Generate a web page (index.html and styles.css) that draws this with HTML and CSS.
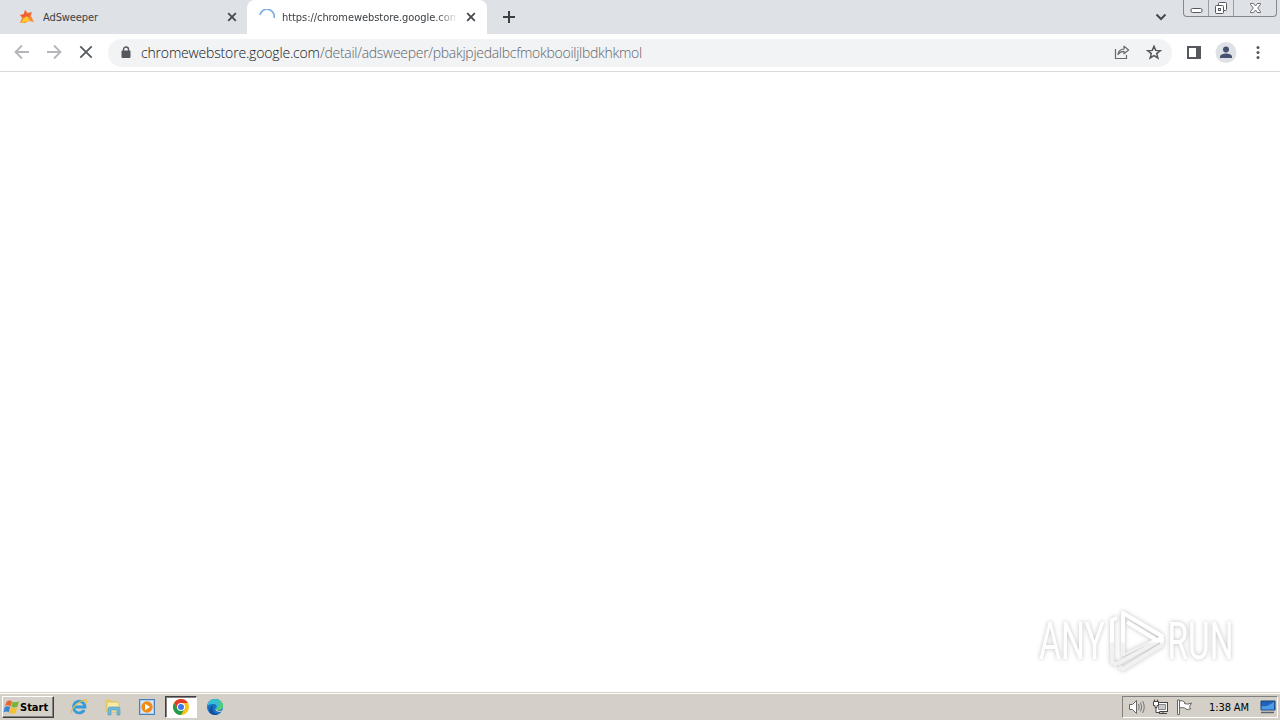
FILE: index.html
```
<!DOCTYPE html>
<html lang="en">
<head>
<meta charset="UTF-8" />
<title>chromewebstore.google.com</title>
<link rel="stylesheet" href="styles.css">
</head>
<body>

<div class="browser">
  <div class="tab-strip">
    <div class="tab">
      <svg class="favicon" width="16" height="16" viewBox="0 0 16 16">
        <path d="M6 1l3 3 4-1-1 4 3 6-5-1-4 2-5 0 2-5-2-3 4 0z" fill="#f58a3c"/>
        <path d="M6 1l2 4 4-2-2 5-5 1-4-3 4-1z" fill="#ef5d3b"/>
        <path d="M8 7l3 5-5 1-4 1 3-5z" fill="#ffc928"/>
      </svg>
      <span class="tab-title">AdSweeper</span>
      <svg class="tab-close" width="10" height="10" viewBox="0 0 10 10"><path d="M1.2 1.2l7.6 7.6M8.800 1.200L1.200 8.800" stroke="#45494e" stroke-width="1.8"/></svg>
    </div>
    <div class="tab active">
      <svg class="favicon" width="16" height="16" viewBox="0 0 16 16"><path d="M.9 6A7.200 7.200 0 0 1 15.100 9" fill="none" stroke="#80aee6" stroke-width="1.700"/></svg>
      <span class="tab-title fade">https://chromewebstore.google.com</span>
      <svg class="tab-close" width="10" height="10" viewBox="0 0 10 10"><path d="M1.2 1.2l7.6 7.6M8.800 1.200L1.200 8.800" stroke="#45494e" stroke-width="1.8"/></svg>
    </div>
    <svg class="new-tab" width="12" height="12" viewBox="0 0 12 12"><path d="M6 0v12M0 6h12" stroke="#3c4043" stroke-width="2"/></svg>
    <svg class="tab-search" width="12" height="8" viewBox="0 0 12 8"><path d="M1.5 1.5L6 6l4.500-4.500" fill="none" stroke="#45494e" stroke-width="2"/></svg>
    <div class="window-buttons">
      <div class="win-btn min"><svg width="13" height="16" viewBox="0 0 13 16"><rect x="1" y="8.500" width="11" height="4" rx="1.500" fill="#fff" stroke="#55585e"/></svg></div>
      <div class="win-btn max"><svg width="14" height="16" viewBox="0 0 14 16"><path d="M4.500 5V3.500q0-1 1-1h6q1 0 1 1v6q0 1-1 1H10" fill="#fff" stroke="#55585e"/><rect x="1.500" y="5.500" width="8" height="8" rx="1" fill="#fff" stroke="#55585e"/><rect x="4.500" y="8.500" width="2" height="2" fill="none" stroke="#55585e"/></svg></div>
      <div class="win-btn close"><svg width="13" height="16" viewBox="0 0 13 16"><path d="M1.500 3.500h3l2 2.500 2-2.500h3v1L8.700 8l2.800 3.500v1h-3l-2-2.500-2 2.500h-3v-1L4.300 8 1.500 4.500z" fill="#fff" stroke="#66696f"/></svg></div>
    </div>
  </div>

  <div class="toolbar">
    <svg class="nav" width="16" height="16" viewBox="0 0 16 16"><path d="M15 8H2M8 1.500L1.500 8 8 14.500" fill="none" stroke="#b4b6b9" stroke-width="1.800"/></svg>
    <svg class="nav" width="16" height="16" viewBox="0 0 16 16"><path d="M1 8h13M8 1.500L14.500 8 8 14.500" fill="none" stroke="#b4b6b9" stroke-width="1.800"/></svg>
    <svg class="nav" width="16" height="16" viewBox="0 0 16 16"><path d="M2.300 2.300l11.400 11.400M13.700 2.300L2.300 13.700" stroke="#55595e" stroke-width="1.800"/></svg>
    <div class="omnibox">
      <svg width="10" height="13" viewBox="0 0 10 13"><path d="M2.500 6V3.500a2.500 2.500 0 0 1 5 0V6" fill="none" stroke="#55595e" stroke-width="1.400"/><rect x=".5" y="4.500" width="9" height="7.500" rx="1" fill="#55595e"/></svg>
      <div class="url"><span class="host">chromewebstore.google.com</span><span class="path">/detail/adsweeper/pbakjpjedalbcfmokbooiljlbdkhkmol</span></div>
      <svg class="share" width="16" height="16" viewBox="0 0 16 16"><path d="M1.500 4v9.500h11V10" fill="none" stroke="#66696e" stroke-width="1.200"/><path d="M4 9.500c.3-3.500 2.500-5.300 6-5.500V1.200L14.600 5 10 8.800V6.400C7.500 6.400 5.500 7.300 4 9.500z" fill="none" stroke="#66696e" stroke-width="1.200" stroke-linejoin="round"/></svg>
      <svg class="star" width="16" height="16" viewBox="0 0 16 16"><path d="M8 1.200l1.700 4.200 4.500.3-3.500 2.900 1.200 4.400L8 10.600l-3.900 2.400 1.200-4.400-3.500-2.900 4.500-.3z" fill="none" stroke="#55595e" stroke-width="1.500"/></svg>
    </div>
    <svg class="side-panel" width="14" height="14" viewBox="0 0 14 14"><rect x="1" y="1" width="12" height="11" fill="#fff" stroke="#55595e" stroke-width="2"/><path d="M9 0h5v13H9z" fill="#55595e"/></svg>
    <svg class="profile" width="22" height="22" viewBox="0 0 22 22"><circle cx="11" cy="10.500" r="10.500" fill="#dee1e6"/><circle cx="11" cy="7.500" r="3" fill="#455170"/><path d="M5 16v-1.300c0-2 3.500-3.200 6-3.200s6 1.200 6 3.200V16z" fill="#455170"/></svg>
    <svg class="menu" width="4" height="14" viewBox="0 0 4 14" fill="#55595e"><circle cx="2" cy="1.600" r="1.500"/><circle cx="2" cy="6.600" r="1.500"/><circle cx="2" cy="11.600" r="1.500"/></svg>
  </div>

  <div class="page">
    <svg class="watermark" width="230" height="76" viewBox="0 0 230 76">
      <defs>
        <linearGradient id="shine" x1="0" y1="0" x2="0" y2="76" gradientUnits="userSpaceOnUse">
          <stop offset=".57" stop-color="#fff"/>
          <stop offset=".6" stop-color="#f1f1f1"/>
        </linearGradient>
      </defs>
      <text class="wm-text" transform="translate(9 61) scale(.66 1)" fill="url(#shine)">ANY</text>
      <g fill="none" stroke="url(#shine)" stroke-width="4" stroke-linejoin="round">
        <path d="M93 58V15l39 23-4 5-31-19"/>
        <path d="M87 20l-5 2v42l5 3"/>
        <path d="M87 66l45-25v6L93 71l-4-2"/>
        <path d="M93 57l34-16" stroke-width="2"/>
      </g>
      <text class="wm-text" transform="translate(137.500 61) scale(.655 1)" fill="url(#shine)">RUN</text>
    </svg>
  </div>
</div>

<div class="taskbar">
  <div class="start">
    <svg width="17" height="16" viewBox="0 0 16 16"><path d="M3 3c2-2 4-1.800 5.500-.6L7.100 7.400C5 6 3.500 6 1.500 7.300z" fill="#e9642f"/><path d="M9 2.700c2 1 4 .8 6.500-.5L14 7.800c-2.200 1.100-4 1-6.200-.1z" fill="#76b536"/><path d="M1.200 8.100c2-1.300 3.700-1.300 5.500 0l-1.500 5.400c-1.800-1.200-3.300-1.200-5.200.1z" fill="#3e82d0"/><path d="M7.400 8.500c2 1 4 1 6.300.1l-1.600 5.500c-2.200 1-4.200.9-6.200-.3z" fill="#f5c02e"/></svg>
    <span>Start</span>
  </div>
  <div class="quick-launch">
    <div class="app">
      <svg width="18" height="18" viewBox="0 0 18 18"><path d="M14.200 12A5.800 5.800 0 1 1 15 9H5" fill="none" stroke="#369cd9" stroke-width="2.800"/><path d="M2 15C-.5 12.500 7 4 14 2c3-.7 3.200 1 2 3" fill="none" stroke="#e8bd45" stroke-width="1.300"/></svg>
    </div>
    <div class="app">
      <svg width="18" height="18" viewBox="0 0 18 18"><path d="M1 2l5-1 2 2h6v11H1z" fill="#e9cd70"/><path d="M3 4h10l2 1v9H3z" fill="#f8e9a9" stroke="#d3b652" stroke-width=".6"/><path d="M4 17V11q0-2 2-2h8q2 0 2 2v6h-3v-5H7v5z" fill="#72b8d8" stroke="#4a97bf" stroke-width=".6"/></svg>
    </div>
    <div class="app">
      <svg width="18" height="18" viewBox="0 0 18 18"><rect x="1.500" y="1.500" width="15" height="15" fill="#a8cdf0" stroke="#4a7fb9"/><rect x="3" y="3" width="12" height="12" fill="#d8eafa"/><circle cx="9" cy="9" r="5.700" fill="#f28a17"/><path d="M7 5.800v6.400L12 9z" fill="#fff"/></svg>
    </div>
    <div class="app pressed">
      <svg width="18" height="18" viewBox="0 0 18 18"><circle cx="9" cy="9" r="8" fill="#fbc116"/><path d="M2.070 5A8 8 0 0 1 15.930 5H9L5.540 11z" fill="#e33b2e"/><path d="M2.070 5A8 8 0 0 0 9 17l3.460-6L9 9l-3.460 2z" fill="#229b4b"/><circle cx="9" cy="9" r="4" fill="#fff"/><circle cx="9" cy="9" r="3" fill="#3b78e7"/></svg>
    </div>
    <div class="app">
      <svg width="18" height="18" viewBox="0 0 18 18"><circle cx="9" cy="9" r="8" fill="#1670c4"/><path d="M1.300 8C2 3.500 5 1 9 1c5 0 8 3.500 8 7 0 3-2.500 4-4.500 4-2 0-3-.8-2-2 1-2.500-1-4-3.500-4S2 7 1.300 8z" fill="#36bfd0"/><path d="M12 1.600c3.500 1.400 5 4 5 6.400 0 3-2.500 4-4.500 4-2 0-3-.8-2-2 3-1 4-5 1.500-8.400z" fill="#52cc76"/><path d="M9.800 9.500c-.6 1.500.8 3 3 3.200 1.500.1 2.700-.1 3.600-.5l-1 1.600c-4 .8-7-1.500-5.600-4.300z" fill="#d4d0c8"/><path d="M7 8c-2 4 1 8 5 8.400A8 8 0 0 1 4 15C2 12 4 8.500 7 8z" fill="#154f9b"/></svg>
    </div>
  </div>
  <div class="tray">
    <svg width="18" height="16" viewBox="0 0 18 16"><path d="M1.500 5.500h3l4-4v13l-4-4h-3z" fill="#fff" stroke="#666" stroke-linejoin="round"/><path d="M10.500 5q1.500 3 0 6M12.500 3.500q2.500 4.500 0 9M14.500 2q3.500 6 0 12" fill="none" stroke="#777"/></svg>
    <svg width="17" height="16" viewBox="0 0 17 16"><rect x="4.500" y="3.500" width="11" height="9" fill="#fff" stroke="#444"/><path d="M6.500 5.500h7v5h-7z" fill="#c9c9c5" stroke="#888"/><path d="M7 14.500h8M11 12v3" stroke="#444"/><path d="M1.500 2.500h5v4h-1.500v2h-2v-2H1.500zM4 8v5.500h4M2.500 .5v2M5.500 .5v2" fill="#fff" stroke="#444"/></svg>
    <svg class="flag" width="17" height="16" viewBox="0 0 17 16"><path d="M1.500 1v14.500h2V1z" fill="#fff" stroke="#666"/><path d="M3.500 2q3-1 5 1v1.500q3 1.500 7-.5l-2 3.500 1 2.500q-4 1.500-6-1-2-1-5 0z" fill="#fff" stroke="#666"/></svg>
    <span class="clock">1:38 AM</span>
    <svg class="desktop" width="16" height="14" viewBox="0 0 16 14"><path d="M1 1h14v9H1z" fill="#1f62b9" stroke="#164077"/><path d="M1.500 9.500V6Q8 7 14 1.500v8z" fill="#4d9be4"/><path d="M1 12.500h13" stroke="#5a6470" stroke-width="1.500"/></svg>
  </div>
</div>

</body>
</html>
```

FILE: styles.css
```
html, body {
  margin: 0;
  height: 100%;
  overflow: hidden;
}

body {
  display: flex;
  flex-direction: column;
  background: #fff;
  font-family: "DejaVu Sans Condensed", "DejaVu Sans", sans-serif;
  font-size: 11px;
}

svg {
  display: block;
  flex: none;
}

.browser {
  flex: 1;
  display: flex;
  flex-direction: column;
}

/* tabs */
.tab-strip {
  height: 34px;
  display: flex;
  background: #dee1e6;
}

.tab {
  box-sizing: border-box;
  width: 247px;
  padding: 0 10px 0 19px;
  display: flex;
  align-items: center;
  color: #3c4043;
}

.tab.active {
  width: 240px;
  padding: 0 11px 0 12px;
  background: #fff;
  border-radius: 8px 8px 0 0;
}

.tab-title {
  flex: 1;
  margin-left: 8px;
  padding-top: 1px;
  white-space: nowrap;
  overflow: hidden;
  line-height: 16px;
  letter-spacing: -0.1px;
}

.tab.active .tab-title {
  margin-left: 7px;
}

.tab-title.fade {
  flex: none;
  width: 176px;
  margin-right: auto;
  letter-spacing: -0.06px;
  -webkit-mask-image: linear-gradient(to right, #000 88%, transparent);
  mask-image: linear-gradient(to right, #000 88%, transparent);
}

.new-tab {
  margin: 11px 0 0 16px;
}

.tab-search {
  margin: 13px 16px 0 auto;
}

.window-buttons {
  box-sizing: border-box;
  display: flex;
  width: 94px;
  height: 17px;
  margin-right: 3px;
  border: 1px solid #85888e;
  border-top: 0;
  border-radius: 0 0 4px 4px;
}

.win-btn {
  display: flex;
  justify-content: center;
  border-right: 1px solid #9b9ea4;
}

.min {
  width: 24px;
}

.max {
  width: 24px;
}

.close {
  flex: 1;
  border-right: 0;
}

/* toolbar */
.toolbar {
  height: 37px;
  display: flex;
  align-items: center;
  padding-left: 14px;
  border-bottom: 1px solid #d9dadc;
}

.nav {
  margin-right: 16px;
  margin-bottom: 1px;
}

.omnibox {
  box-sizing: border-box;
  width: 1064px;
  height: 28px;
  margin-left: -2px;
  padding: 0 10px 0 13px;
  display: flex;
  align-items: center;
  background: #f1f3f4;
  border-radius: 14px;
}

.url {
  margin-left: 10px;
  display: flex;
  font-family: "Open Sans", "Noto Sans", sans-serif;
  font-weight: 300;
  font-size: 14px;
  line-height: 20px;
  white-space: nowrap;
}

.host {
  color: #111418;
  width: 179px;
  letter-spacing: -0.17px;
}

.path {
  color: #5f6368;
  letter-spacing: -0.29px;
}

.share {
  margin: 0 16px 0 auto;
}

.side-panel {
  margin-left: 15px;
}

.profile {
  margin-left: 14px;
}

.menu {
  margin-left: 19px;
}

/* page area */
.page {
  flex: 1;
  display: flex;
  justify-content: flex-end;
  align-items: flex-end;
}

.watermark {
  margin: 0 20px 18px 0;
  filter: drop-shadow(0 0 2px rgba(0, 0, 0, 0.25));
}

.wm-text {
  font-family: Roboto, sans-serif;
  font-size: 51px;
}

/* taskbar */
.taskbar {
  box-sizing: border-box;
  height: 28px;
  padding: 3px 2px 2px;
  display: flex;
  background: #d4d0c8;
  border-top: 1px solid #d4d0c8;
  box-shadow: inset 0 1px #fff;
}

.start {
  box-sizing: border-box;
  width: 52px;
  height: 22px;
  display: flex;
  align-items: center;
  border: 1px solid;
  border-color: #fff #404040 #404040 #fff;
  box-shadow: inset -1px -1px #808080;
  font-weight: bold;
  letter-spacing: 0;
  color: #000;
}

.quick-launch {
  display: flex;
  margin-left: 9px;
}

.app {
  box-sizing: border-box;
  width: 32px;
  height: 22px;
  margin-right: 2px;
  display: flex;
  align-items: center;
  justify-content: center;
}

.app.pressed {
  background: #fff;
  border: 1px solid;
  border-color: #404040 #fff #fff #404040;
  box-shadow: inset 1px 1px #808080;
}

.tray {
  box-sizing: border-box;
  width: 156px;
  height: 22px;
  margin-left: auto;
  padding-left: 5px;
  display: flex;
  align-items: center;
  gap: 6px;
  border: 1px solid;
  border-color: #808080 #fff #fff #808080;
}

.flag {
  margin-left: 1px;
}

.clock {
  margin-left: 10px;
  width: 45px;
  white-space: nowrap;
  letter-spacing: -0.1px;
  color: #000;
}
```
